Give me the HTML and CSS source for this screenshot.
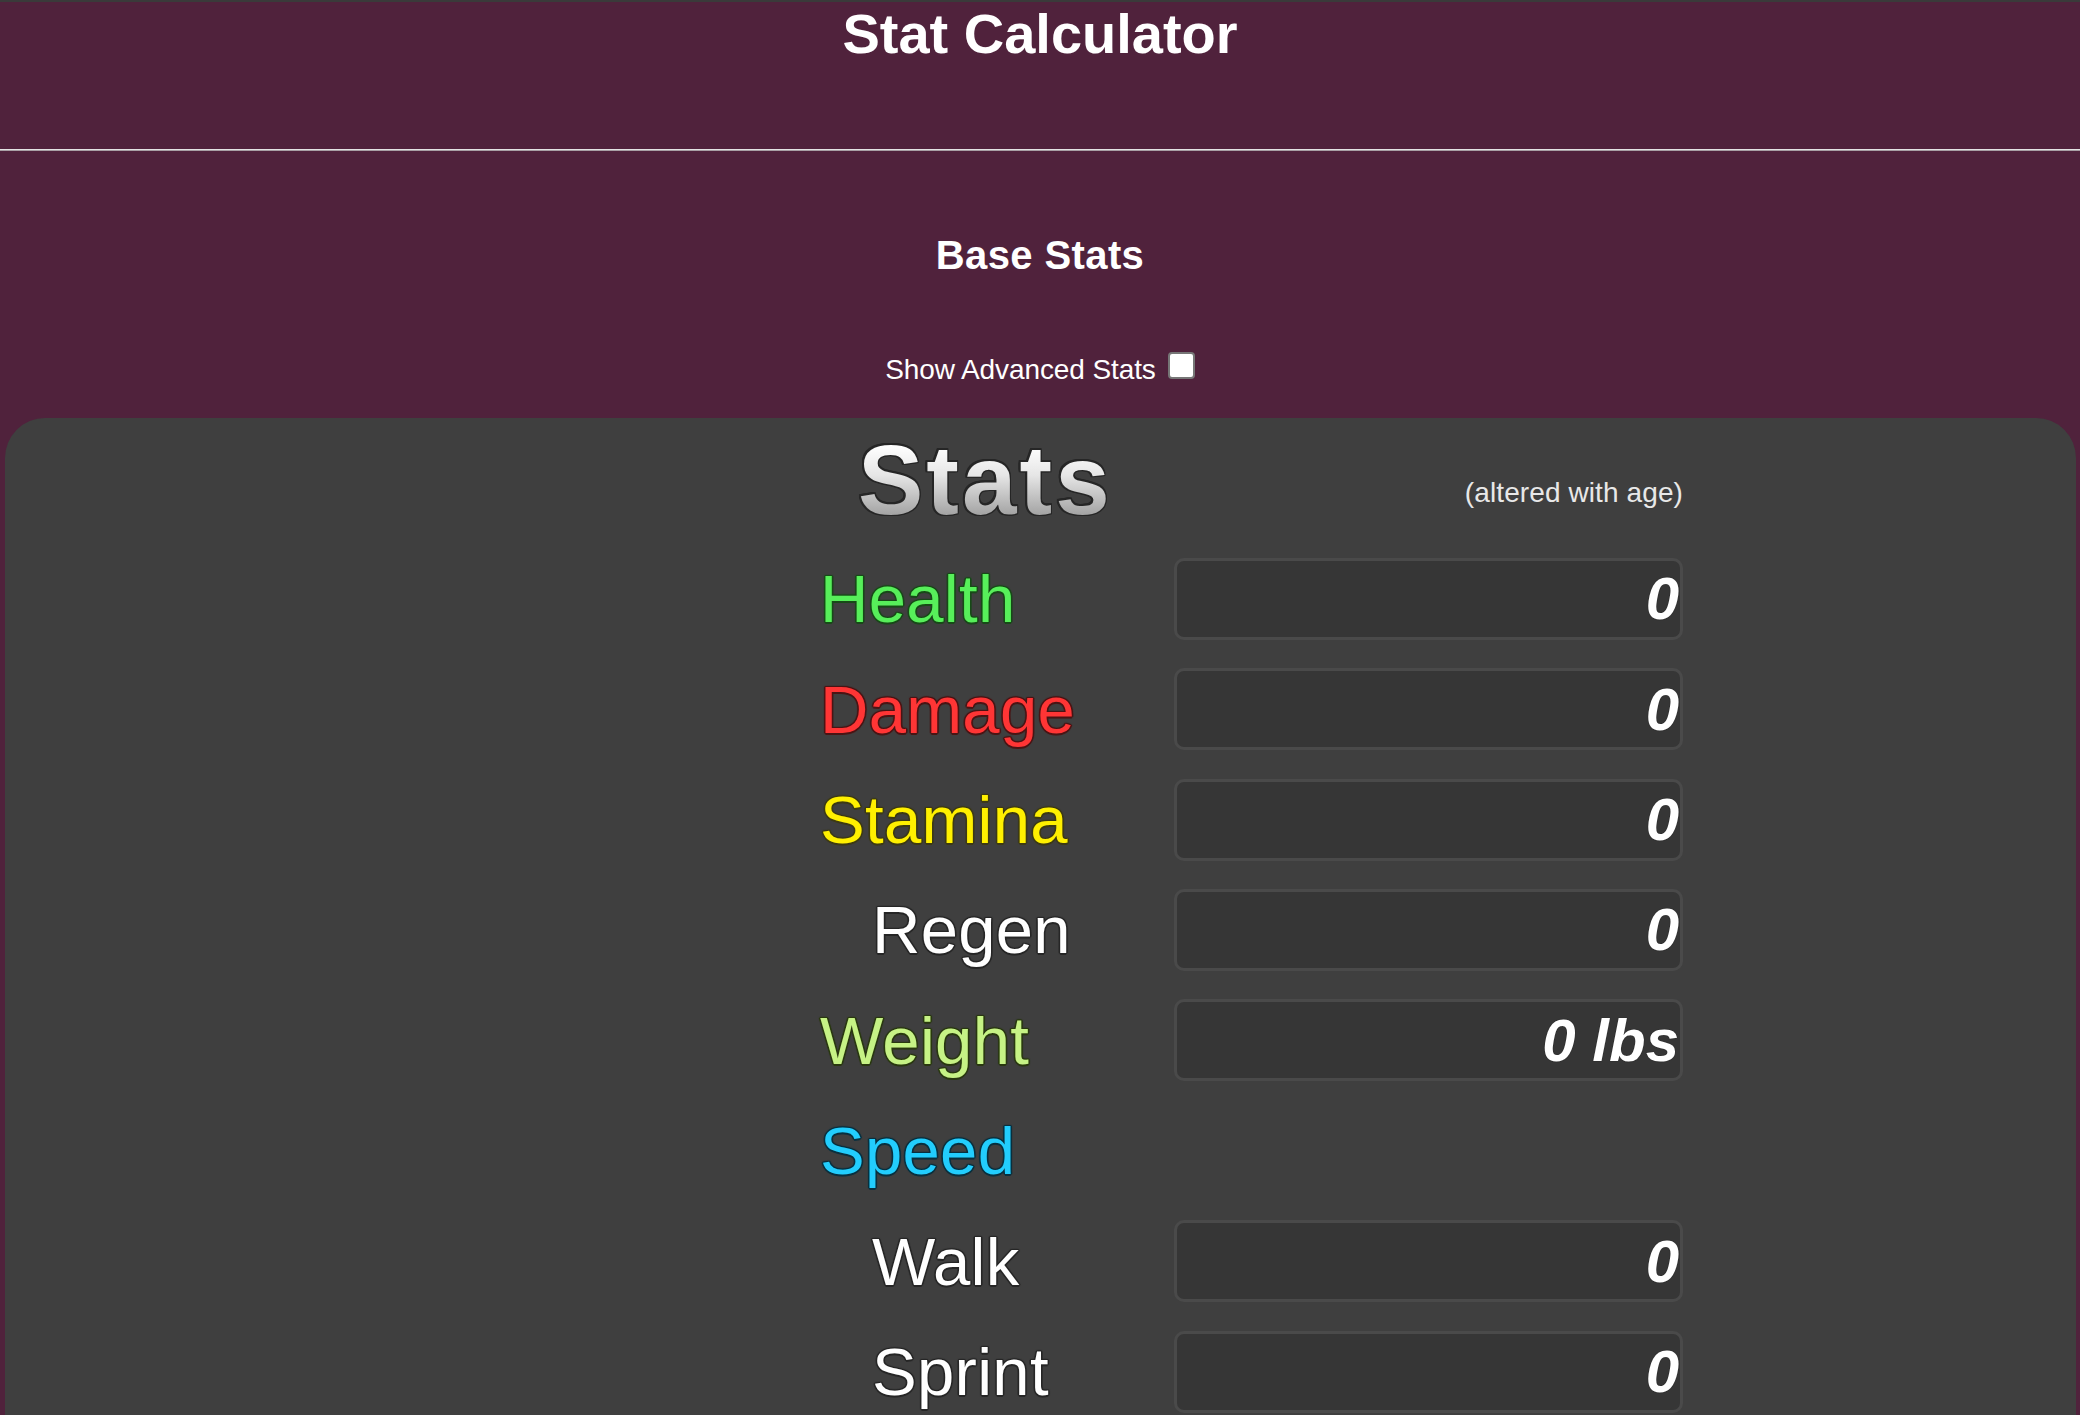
FILE: index.html
```html
<!DOCTYPE html>
<html lang="en">
<head>
<meta charset="utf-8">
<title>Stat Calculator</title>
<link rel="stylesheet" href="styles.css">
</head>
<body>
<header class="site-header">
  <h1 class="title">Stat Calculator</h1>
</header>
<hr class="divider">
<section class="base">
  <h2 class="base-title">Base Stats</h2>
  <label class="advanced">Show Advanced Stats <input type="checkbox" class="check"></label>
</section>
<main class="panel">
  <div class="stats">
    <div class="stats-title">Stats</div>
    <div class="stats-note">(altered with age)</div>

    <div class="label health">Health</div>
    <div class="value">0</div>

    <div class="label damage">Damage</div>
    <div class="value">0</div>

    <div class="label stamina">Stamina</div>
    <div class="value">0</div>

    <div class="label sub">Regen</div>
    <div class="value">0</div>

    <div class="label weight">Weight</div>
    <div class="value">0 lbs</div>

    <div class="label speed">Speed</div>
    <div class="empty"></div>

    <div class="label sub">Walk</div>
    <div class="value">0</div>

    <div class="label sub">Sprint</div>
    <div class="value">0</div>
  </div>
</main>
</body>
</html>
```
FILE: styles.css
```css
html, body {
  margin: 0;
  padding: 0;
}
body {
  background: #50223c;
  border-top: 2px solid #3a3a3a;
  font-family: "Liberation Sans", Arial, sans-serif;
  color: #fff;
}
.site-header {
  text-align: center;
}
.title {
  margin: 0 0 83px;
  font-size: 56px;
  line-height: 1.15;
  font-weight: bold;
}
.divider {
  margin: 0;
  height: 0;
  border: 0;
  border-top: 1px solid #e4e4e4;
  border-bottom: 1px solid #a9a0a5;
}
.base {
  text-align: center;
  padding-top: 81px;
  padding-bottom: 31px;
}
.base-title {
  margin: 0 0 74px;
  font-size: 40px;
  letter-spacing: 0.4px;
  line-height: 1.15;
  font-weight: bold;
}
.advanced {
  display: inline-flex;
  align-items: center;
  gap: 12px;
  font-size: 28px;
  letter-spacing: -0.1px;
  line-height: 1.15;
}
.check {
  appearance: none;
  -webkit-appearance: none;
  margin: 0 0 8px;
  width: 27px;
  height: 27px;
  background: #fff;
  border: 2px solid #767676;
  border-radius: 4px;
}
.panel {
  margin: 0 4px 0 5px;
  background: #3f3f3f;
  border-radius: 40px 40px 0 0;
  padding: 13px 0 120px;
}
.stats {
  margin-left: 815px;
  display: grid;
  grid-template-columns: 354px 509px;
  grid-template-rows: 98px;
  grid-auto-rows: 82px;
  row-gap: 28.4px;
}
.stats-title {
  grid-row: 1;
  height: 98px;
  padding-left: 38px;
  font-size: 98px;
  line-height: 1;
  font-weight: bold;
  letter-spacing: 3px;
  background: linear-gradient(180deg, #ffffff 15%, #e6e6e6 45%, #8c8c8c 100%);
  -webkit-background-clip: text;
  background-clip: text;
  color: transparent;
  filter: drop-shadow(1.5px 0 0 #262626) drop-shadow(-1.5px 0 0 #262626) drop-shadow(0 1.5px 0 #262626) drop-shadow(0 -1.5px 0 #262626);
}
.stats-note {
  grid-row: 1;
  align-self: end;
  justify-self: end;
  margin-bottom: 20px;
  font-size: 28px;
  line-height: 1.15;
  color: #e8e8e8;
  letter-spacing: 0.1px;
}
.label {
  align-self: center;
  font-size: 67px;
  letter-spacing: 0.3px;
  line-height: 1;
  --o: #222;
  text-shadow: 1.5px 0 0 var(--o), -1.5px 0 0 var(--o), 0 1.5px 0 var(--o), 0 -1.5px 0 var(--o),
    1px 1px 1px var(--o), -1px -1px 1px var(--o), 1px -1px 1px var(--o), -1px 1px 1px var(--o);
}
.health { color: #57ef5a; --o: #174a17; }
.damage { color: #ff3535; --o: #4a1414; }
.stamina { color: #fff000; --o: #3d3a12; }
.weight { color: #c6f285; --o: #29380f; }
.speed { color: #22cdfd; --o: #08303f; }
.sub {
  color: #fff;
  padding-left: 52px;
  --o: #262626;
}
.value {
  box-sizing: border-box;
  height: 82px;
  display: flex;
  align-items: center;
  justify-content: flex-end;
  padding-right: 1px;
  background: #363636;
  border: 3px solid #4a4a4a;
  border-radius: 10px;
  font-size: 60px;
  font-weight: bold;
  font-style: italic;
  color: #fff;
  text-shadow: 0 0 1px #111;
}
.empty {
  height: 82px;
}
```
